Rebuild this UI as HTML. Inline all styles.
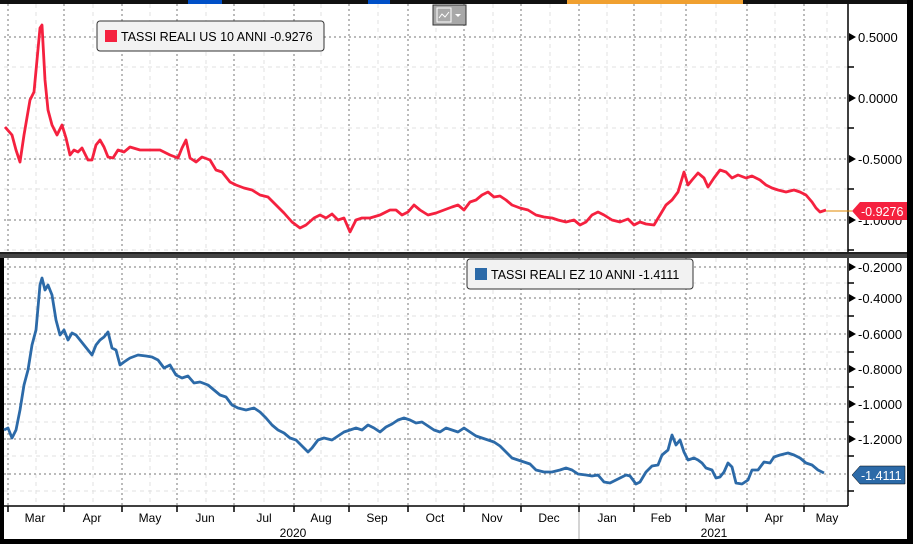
<!DOCTYPE html>
<html><head><meta charset="utf-8"><style>
html,body{margin:0;padding:0;background:#fff;}
body{width:913px;height:544px;position:relative;overflow:hidden;font-family:"Liberation Sans",sans-serif;}
svg{position:absolute;left:0;top:0;}
</style></head><body>
<svg width="913" height="544" viewBox="0 0 913 544" xmlns="http://www.w3.org/2000/svg" font-family="Liberation Sans, sans-serif">
<rect width="913" height="544" fill="#fff"/>
<rect x="0" y="0" width="913" height="4" fill="#111"/>
<rect x="188" y="0" width="34" height="4" fill="#0050c8"/>
<rect x="368" y="0" width="22" height="4" fill="#0050c8"/>
<rect x="567" y="0" width="176" height="4" fill="#f0a030"/>
<rect x="0" y="258" width="4" height="286" fill="#000"/>
<rect x="907" y="0" width="6" height="544" fill="#000"/>
<rect x="0" y="539" width="913" height="5" fill="#000"/>
<g stroke="#e0e0e0" stroke-width="1" stroke-dasharray="4,4">
<path d="M36 4V252M93 4V252M150 4V252M206 4V252M264 4V252M321 4V252M378 4V252M436 4V252M493 4V252M550 4V252M607 4V252M661 4V252M716 4V252M775 4V252M827 4V252"/>
<path d="M36 258V505M93 258V505M150 258V505M206 258V505M264 258V505M321 258V505M378 258V505M436 258V505M493 258V505M550 258V505M607 258V505M661 258V505M716 258V505M775 258V505M827 258V505"/>
<path d="M4 67H848M4 128H848M4 189H848M4 250H848M4 283H848M4 316H848M4 352H848M4 387H848M4 422H848M4 456H848M4 491H848"/>
</g>
<g stroke="#777" stroke-width="1" stroke-dasharray="2,3">
<path d="M8 4V252M64 4V252M122 4V252M177 4V252M234 4V252M294 4V252M349 4V252M408 4V252M464 4V252M521 4V252M579 4V252M634 4V252M686 4V252M747 4V252M804 4V252"/>
<path d="M8 258V505M64 258V505M122 258V505M177 258V505M234 258V505M294 258V505M349 258V505M408 258V505M464 258V505M521 258V505M579 258V505M634 258V505M686 258V505M747 258V505M804 258V505"/>
<path d="M4 37H848M4 98H848M4 159H848M4 220H848M4 267H848M4 298H848M4 334H848M4 369H848M4 404H848M4 439H848M4 474H848"/>
</g>
<rect x="0" y="252" width="907" height="2" fill="#222"/>
<rect x="0" y="254" width="907" height="4" fill="#444"/>
<path d="M848 4V252M848 258V506M4 506H848" stroke="#000" stroke-width="1.5"/>
<g stroke="#000" stroke-width="1.5">
<path d="M848 67h6M848 128h6M848 189h6M848 250h6M848 283h6M848 316h6M848 352h6M848 387h6M848 422h6M848 456h6M848 491h6"/>
<path d="M8 506v6M64 506v6M122 506v6M177 506v6M234 506v6M294 506v6M349 506v6M408 506v6M464 506v6M521 506v6M579 506v6M634 506v6M686 506v6M747 506v6M804 506v6"/>
</g>
<path d="M579 512V539" stroke="#aaa"/>
<g fill="#000">
<path d="M849 33l7 4-7 4zM849 94l7 4-7 4zM849 155l7 4-7 4zM849 216l7 4-7 4zM849 263l7 4-7 4zM849 294l7 4-7 4zM849 330l7 4-7 4zM849 365l7 4-7 4zM849 400l7 4-7 4zM849 435l7 4-7 4z"/>
</g>
<g font-size="13" fill="#000">
<text x="858" y="42">0.5000</text>
<text x="858" y="103">0.0000</text>
<text x="858" y="164">-0.5000</text>
<text x="858" y="225">-1.0000</text>
<text x="858" y="272">-0.2000</text>
<text x="858" y="303">-0.4000</text>
<text x="858" y="339">-0.6000</text>
<text x="858" y="374">-0.8000</text>
<text x="858" y="409">-1.0000</text>
<text x="858" y="444">-1.2000</text>
</g>
<g font-size="12" fill="#000" text-anchor="middle">
<text x="35" y="522">Mar</text><text x="92" y="522">Apr</text><text x="150" y="522">May</text><text x="205" y="522">Jun</text><text x="264" y="522">Jul</text><text x="321" y="522">Aug</text><text x="377" y="522">Sep</text><text x="435" y="522">Oct</text><text x="492" y="522">Nov</text><text x="549" y="522">Dec</text><text x="607" y="522">Jan</text><text x="661" y="522">Feb</text><text x="715" y="522">Mar</text><text x="774" y="522">Apr</text><text x="827" y="522">May</text>
<text x="293" y="537">2020</text><text x="714" y="537">2021</text>
</g>
<polyline fill="none" stroke="#f5213f" stroke-width="2.8" stroke-linejoin="round" points="5,127 12,135 16,150 20,162 24,135 30,100 34,92 37,60 40,28 42,25 45,80 48,110 52,125 57,135 62,125 66,138 70,155 74,150 78,152 82,148 88,160 92,160 96,145 100,140 104,147 108,157 113,158 118,150 124,152 130,147 140,150 150,150 160,150 170,155 178,158 182,148 186,140 190,158 196,162 202,157 210,160 216,170 222,172 230,182 236,185 244,188 252,190 260,195 268,197 276,205 284,213 292,222 300,228 306,225 314,218 320,215 326,218 332,214 338,220 344,218 350,232 356,220 362,218 370,218 380,215 390,210 396,210 402,215 408,212 414,205 420,210 428,215 436,213 444,210 452,207 458,205 464,210 470,202 476,200 482,195 488,192 494,197 500,196 506,200 512,205 520,208 528,210 536,215 544,217 552,218 558,220 566,222 574,220 580,225 586,222 592,215 598,212 604,215 612,220 620,222 628,219 634,225 640,222 646,224 654,225 660,215 666,205 672,200 678,192 684,172 688,185 692,180 698,173 704,178 708,187 714,178 720,170 726,172 732,178 738,175 746,178 752,176 760,180 766,185 772,188 778,190 786,192 794,190 800,192 806,195 812,202 816,208 820,212 826,210"/>
<path d="M826 211H852" stroke="#e08a00" stroke-width="1"/>
<polyline fill="none" stroke="#2c6aa8" stroke-width="2.8" stroke-linejoin="round" points="4,430 8,428 12,438 16,430 20,410 24,385 28,370 32,345 36,330 40,285 42,278 45,290 48,285 52,295 56,320 60,335 64,330 68,340 72,333 76,335 80,340 84,345 88,350 92,355 96,345 100,340 104,337 108,332 112,348 116,350 120,365 124,362 130,358 138,355 146,356 152,357 158,360 164,368 170,365 176,375 182,378 188,376 194,383 200,382 208,385 214,390 220,395 226,397 232,405 238,408 246,410 254,408 260,412 266,418 272,425 278,430 284,433 290,438 296,440 302,446 308,452 312,448 318,440 324,438 332,440 338,436 344,432 350,430 356,428 362,430 368,425 374,428 380,432 386,427 392,424 398,420 404,418 410,420 416,423 422,422 428,426 434,430 440,432 446,428 452,430 458,432 464,428 470,432 476,436 482,438 488,440 494,442 500,446 506,452 512,458 518,460 524,462 530,464 536,470 544,472 552,472 560,470 566,468 572,470 578,474 586,475 592,476 598,475 604,482 610,483 616,480 620,478 626,475 630,476 636,484 640,482 646,472 652,466 658,465 662,455 668,450 672,435 676,445 680,440 684,452 688,460 694,458 698,460 702,463 706,468 712,470 716,478 720,477 724,472 728,463 732,467 736,483 742,484 748,480 752,470 758,470 764,462 770,463 774,457 780,455 788,453 794,455 800,458 806,463 812,465 818,470 824,473"/>
<path d="M852 211l8-9H907v18H860z" fill="#f5213f"/>
<text x="861" y="216" font-size="12.5" fill="#fff">-0.9276</text>
<path d="M852 475l8-9H905v18H860z" fill="#2c6aa8" stroke="#000" stroke-width="0.5"/>
<text x="861" y="480" font-size="12.5" fill="#fff">-1.4111</text>
<rect x="97" y="21" width="227" height="30" rx="3" fill="#f2f2f2" stroke="#333"/>
<rect x="105" y="30" width="12" height="12" fill="#f5213f"/>
<text x="121" y="41" font-size="12.5" fill="#000">TASSI REALI US 10 ANNI -0.9276</text>
<rect x="467" y="259" width="226" height="30" rx="3" fill="#f2f2f2" stroke="#333"/>
<rect x="475" y="268" width="12" height="12" fill="#2c6aa8"/>
<text x="491" y="279" font-size="12.5" fill="#000">TASSI REALI EZ 10 ANNI -1.4111</text>
<rect x="433" y="5" width="33" height="20" fill="#a8a8a8" stroke="#333"/>
<rect x="437" y="8" width="14" height="14" fill="none" stroke="#fff"/>
<path d="M439 18l3-4 3 3 4-5" fill="none" stroke="#fff"/>
<path d="M455 14h6l-3 3z" fill="#fff"/>
</svg>
</body></html>
